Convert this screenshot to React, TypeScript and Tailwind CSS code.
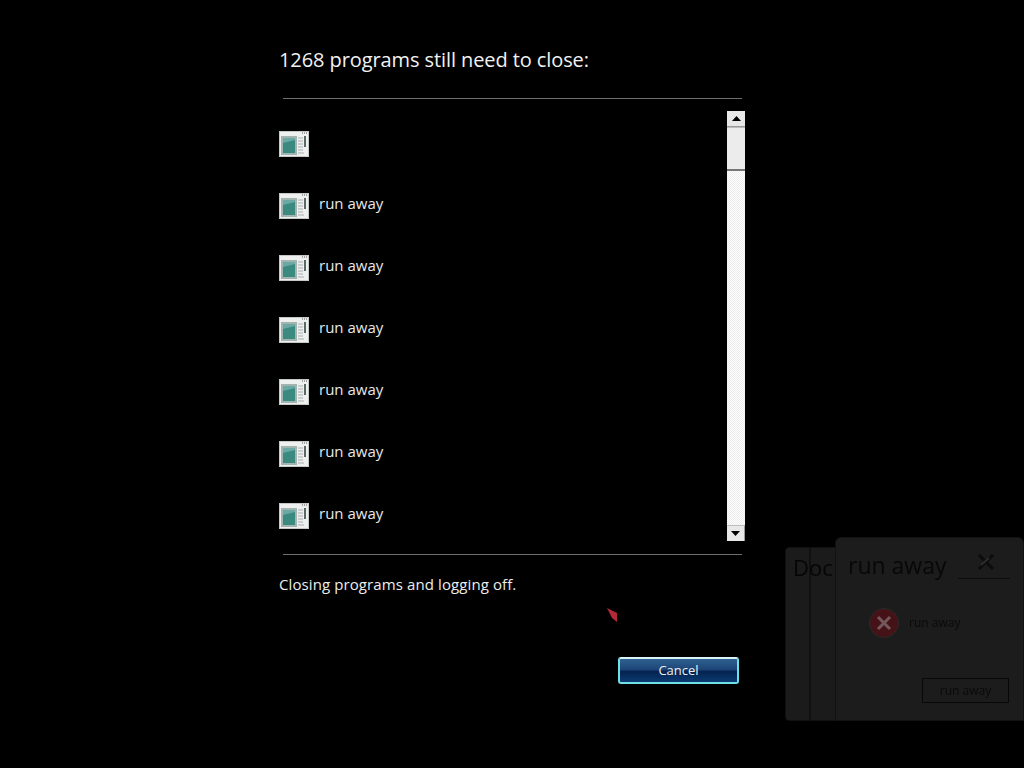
const rows = ["", "run away", "run away", "run away", "run away", "run away", "run away"];

function AppIcon() {
  return (
    <svg width="30" height="26" viewBox="0 0 30 26" className="shrink-0 blur-[0.3px]">
      <rect x="0" y="0" width="30" height="26" fill="#eef0ef" />
      <rect x="0.5" y="0.5" width="29" height="25" fill="none" stroke="#c4c8c7" />
      <rect x="2" y="5" width="16" height="19" fill="#a3b3b0" />
      <rect x="4" y="7" width="12" height="15" fill="#3b8a80" />
      <path d="M4 12 L16 9 V7 H4 Z" fill="#6aa9a4" />
      <path d="M19 7h5M19 10h5M19 13h5M19 16h5M19 19h5M19 22h6" stroke="#a9adac" strokeWidth="1" />
      <rect x="25" y="5" width="2" height="11" fill="#5a6a68" />
      <path d="M23 2h1M25 2h1M27 2h1" stroke="#888" strokeWidth="1.5" />
    </svg>
  );
}

function Row({ label }: { label: string }) {
  return (
    <div className="h-[62px] shrink-0 flex items-center gap-[10px]">
      <AppIcon />
      <span className="text-[15px] text-[#e8e8e8] -mt-[5px]">{label}</span>
    </div>
  );
}

function Scrollbar() {
  return (
    <div className="w-[18px] h-[430px] flex flex-col">
      <div className="h-[16px] bg-[#e8e8e8] border-b border-[#9a9a9a] flex items-center justify-center">
        <svg width="9" height="5" viewBox="0 0 9 5"><path d="M4.5 0 L9 5 H0 Z" fill="#000" /></svg>
      </div>
      <div className="h-[44px] bg-[#ececec] border-t border-[#bdbdbd] border-b-2 border-b-[#777]" />
      <div className="flex-1 bg-[repeating-conic-gradient(#ffffff_0_25%,#ececec_0_50%)] bg-[length:2px_2px]" />
      <div className="h-[16px] bg-[#e8e8e8] border-t border-[#bdbdbd] border-r border-r-[#9a9a9a] flex items-center justify-center">
        <svg width="9" height="5" viewBox="0 0 9 5"><path d="M0 0 H9 L4.5 5 Z" fill="#000" /></svg>
      </div>
    </div>
  );
}

function GhostWindows() {
  return (
    <div className="absolute left-[785px] top-[537px] w-[239px] h-[185px] blur-[0.4px]">
      <div className="absolute left-0 top-[10px] w-[25px] h-[174px] bg-[#1b1b1b] rounded-l-[4px] border border-[#101010]" />
      <div className="absolute left-[25px] top-[10px] w-[26px] h-[174px] bg-[#1b1b1b] border border-[#101010]" />
      <span className="absolute left-[8px] top-[14px] text-[22px] leading-[32px] text-[#060606]">Doc</span>
      <div className="absolute left-[50px] top-0 w-[189px] h-[184px] bg-[#1c1c1c] rounded-t-[6px] border border-[#121212]">
        <span className="absolute left-[12px] top-[12px] text-[23px] leading-[30px] text-[#080808]">run away</span>
        <svg className="absolute left-[140px] top-[14px]" width="20" height="20" viewBox="0 0 20 20">
          <path d="M3 3 L17 17 M17 3 L3 17" stroke="#0c0c0c" strokeWidth="3" />
          <path d="M5 13 L13 6" stroke="#2c2c2c" strokeWidth="2" />
        </svg>
        <div className="absolute left-[122px] top-[40px] w-[52px] h-px bg-[#0c0c0c]" />
        <div className="absolute left-[33px] top-[70px] w-[30px] h-[30px] rounded-full bg-[#451218] border border-[#2a2a2a] flex items-center justify-center">
          <svg width="18" height="18" viewBox="0 0 18 18"><path d="M3 3 L15 15 M15 3 L3 15" stroke="#75585c" strokeWidth="3" /></svg>
        </div>
        <span className="absolute left-[73px] top-[77px] text-[12px] leading-[16px] text-[#0a0a0a]">run away</span>
        <div className="absolute left-[86px] top-[140px] w-[87px] h-[25px] border border-[#080808] flex items-center justify-center text-[12px] text-[#0a0a0a]">run away</div>
      </div>
    </div>
  );
}

export default function App() {
  return (
    <div className="relative w-[1024px] h-[768px] overflow-hidden bg-black text-white font-['Open_Sans','Noto_Sans',sans-serif]">
      <GhostWindows />
      {/* cursor */}
      <svg className="absolute left-[606px] top-[607px] blur-[0.3px]" width="13" height="16" viewBox="0 0 13 16">
        <path d="M1 1 L11 6 L11 15 L6 11 Z" fill="#b3283a" />
      </svg>

      <div className="w-[466px] ml-[279px] flex flex-col">
        <h1 className="mt-[45px] h-[30px] text-[20px] leading-[30px] tracking-[-0.09px] font-normal text-[#f2f2f2]">1268 programs still need to close:</h1>
        <div className="mt-[23px] ml-[4px] w-[459px] h-px bg-[#6e6e6e]" />
        <div className="mt-[12px] flex justify-between h-[430px] overflow-hidden">
          <div className="flex flex-col pt-[2px]">
            {rows.map((label, i) => (
              <Row key={i} label={label} />
            ))}
          </div>
          <Scrollbar />
        </div>
        <div className="mt-[13px] ml-[4px] w-[459px] h-px bg-[#6e6e6e]" />
        <p className="mt-[18px] text-[15px] leading-[22px] tracking-[0.1px] text-[#ededed]">Closing programs and logging off.</p>
        <div className="mt-[62px] flex justify-end pr-[6px]">
          <button className="w-[121px] h-[27px] rounded-[3px] border-2 border-[#6fdfe8] border-t-[#d8f4f6] text-[13px] text-[#f0f0f0] bg-[linear-gradient(#2f6092_0%,#1d4677_45%,#04234f_55%,#0a3b73_100%)]">
            Cancel
          </button>
        </div>
      </div>
    </div>
  );
}
